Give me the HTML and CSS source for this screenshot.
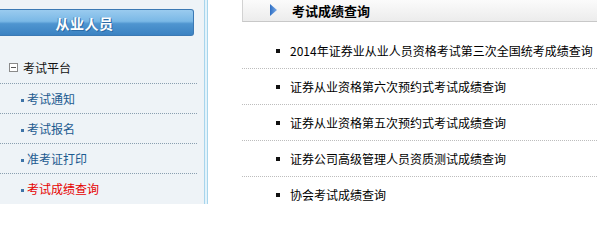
FILE: index.html
```html
<!DOCTYPE html>
<html lang="zh-CN">
<head>
<meta charset="utf-8">
<title>考试成绩查询</title>
<link rel="stylesheet" href="styles.css">
</head>
<body>
<div class="page">
  <aside class="sidebar">
    <div class="side-head"><span>从业人员</span></div>
    <div class="menu">
      <div class="group"><span class="box"></span><span>考试平台</span></div>
      <ul class="items">
        <li><a href="#">考试通知</a></li>
        <li><a href="#">考试报名</a></li>
        <li><a href="#">准考证打印</a></li>
        <li class="current"><a href="#">考试成绩查询</a></li>
      </ul>
    </div>
  </aside>
  <div class="divider"></div>
  <main class="content">
    <div class="title-bar">
      <svg class="arrow" width="8" height="12" viewBox="0 0 8 12"><defs><linearGradient id="ag" x1="0" y1="0" x2="1" y2="0"><stop offset="0" stop-color="#2f6fc4"/><stop offset="1" stop-color="#7aaae6"/></linearGradient></defs><polygon points="0,0 7,6 0,12" fill="url(#ag)"/></svg>
      <span class="title">考试成绩查询</span>
    </div>
    <ul class="list">
      <li>2014年证券业从业人员资格考试第三次全国统考成绩查询</li>
      <li>证券从业资格第六次预约式考试成绩查询</li>
      <li>证券从业资格第五次预约式考试成绩查询</li>
      <li>证券公司高级管理人员资质测试成绩查询</li>
      <li>协会考试成绩查询</li>
    </ul>
  </main>
</div>
</body>
</html>
```

FILE: styles.css
```css
html, body {
  margin: 0;
  padding: 0;
  background: #ffffff;
}
body {
  font-family: "Noto Sans CJK SC", "Noto Sans", sans-serif;
  font-size: 12px;
  color: #000;
}
.page {
  display: flex;
  width: 597px;
  height: 204px;
  overflow: hidden;
}
.sidebar {
  width: 204px;
  flex: none;
  background: #eef3f7;
  padding-top: 9px;
  box-sizing: border-box;
}
.side-head {
  width: 194px;
  height: 27px;
  border: 1px solid #3b79b4;
  border-left: none;
  border-radius: 0 3px 3px 0;
  background: linear-gradient(#9acbef 0%, #7ab8e6 45%, #4f95d0 55%, #3b82c2 100%);
  display: flex;
  align-items: center;
  justify-content: center;
  padding-right: 24px;
  box-sizing: border-box;
}
.side-head span {
  color: #fff;
  font-weight: bold;
  font-size: 14px;
  letter-spacing: 0.5px;
  text-shadow: 1px 1px 0 #2a6aa6, -1px 0 0 #4b8ac2;
}
.menu {
  width: 197px;
  margin-top: 17px;
}
.group {
  height: 31px;
  display: flex;
  align-items: flex-start;
  padding-top: 8px;
  box-sizing: border-box;
  line-height: 13px;
  border-bottom: 1px dotted #8a9fb0;
  color: #111;
  font-size: 12px;
}
.box {
  width: 7px;
  height: 7px;
  border: 1px solid #8a8a8a;
  background: #fff;
  margin: 2px 5px 0 9px;
  position: relative;
}
.box::after {
  content: "";
  position: absolute;
  left: 1px;
  right: 1px;
  top: 3px;
  height: 1px;
  background: #555;
}
.items {
  list-style: none;
  margin: 0;
  padding: 0;
}
.items li {
  height: 29px;
  line-height: 29px;
  border-bottom: 1px dotted #8a9fb0;
  padding-left: 21px;
  display: flex;
  align-items: center;
}
.items li:last-child {
  border-bottom: none;
}
.items li::before {
  content: "";
  width: 3px;
  height: 3px;
  background: #3f74a8;
  margin-right: 3px;
  margin-top: 3px;
}
.items a {
  color: #1c5a90;
  text-decoration: none;
}
.items li.current a {
  color: #e60000;
}
.divider {
  width: 4px;
  flex: none;
  box-sizing: border-box;
  border-left: 1px solid #a8d5ec;
  border-right: 1px solid #a8d5ec;
  background: #e3f3fb;
}
.content {
  flex: 1;
  padding-left: 34px;
  min-width: 0;
}
.title-bar {
  height: 22px;
  box-sizing: border-box;
  border-left: 1px solid #d2d2d2;
  border-bottom: 1px solid #c8c8c8;
  background: linear-gradient(#fbfbfb, #ececec);
  display: flex;
  align-items: center;
  padding-left: 27px;
}
.arrow {
  flex: none;
  margin-top: -1px;
}
.title {
  font-weight: bold;
  font-size: 13px;
  margin-left: 14px;
  color: #000;
}
.list {
  list-style: none;
  margin: 0;
  padding: 11px 0 0 0;
}
.list li {
  height: 35px;
  line-height: 35px;
  border-bottom: 1px dotted #bdbdbd;
  padding-left: 34px;
  display: flex;
  align-items: center;
  white-space: nowrap;
  color: #000;
}
.list li::before {
  content: "";
  width: 4px;
  height: 4px;
  background: #111;
  margin-right: 10px;
  flex: none;
}
.list li:last-child {
  border-bottom: none;
}
```
